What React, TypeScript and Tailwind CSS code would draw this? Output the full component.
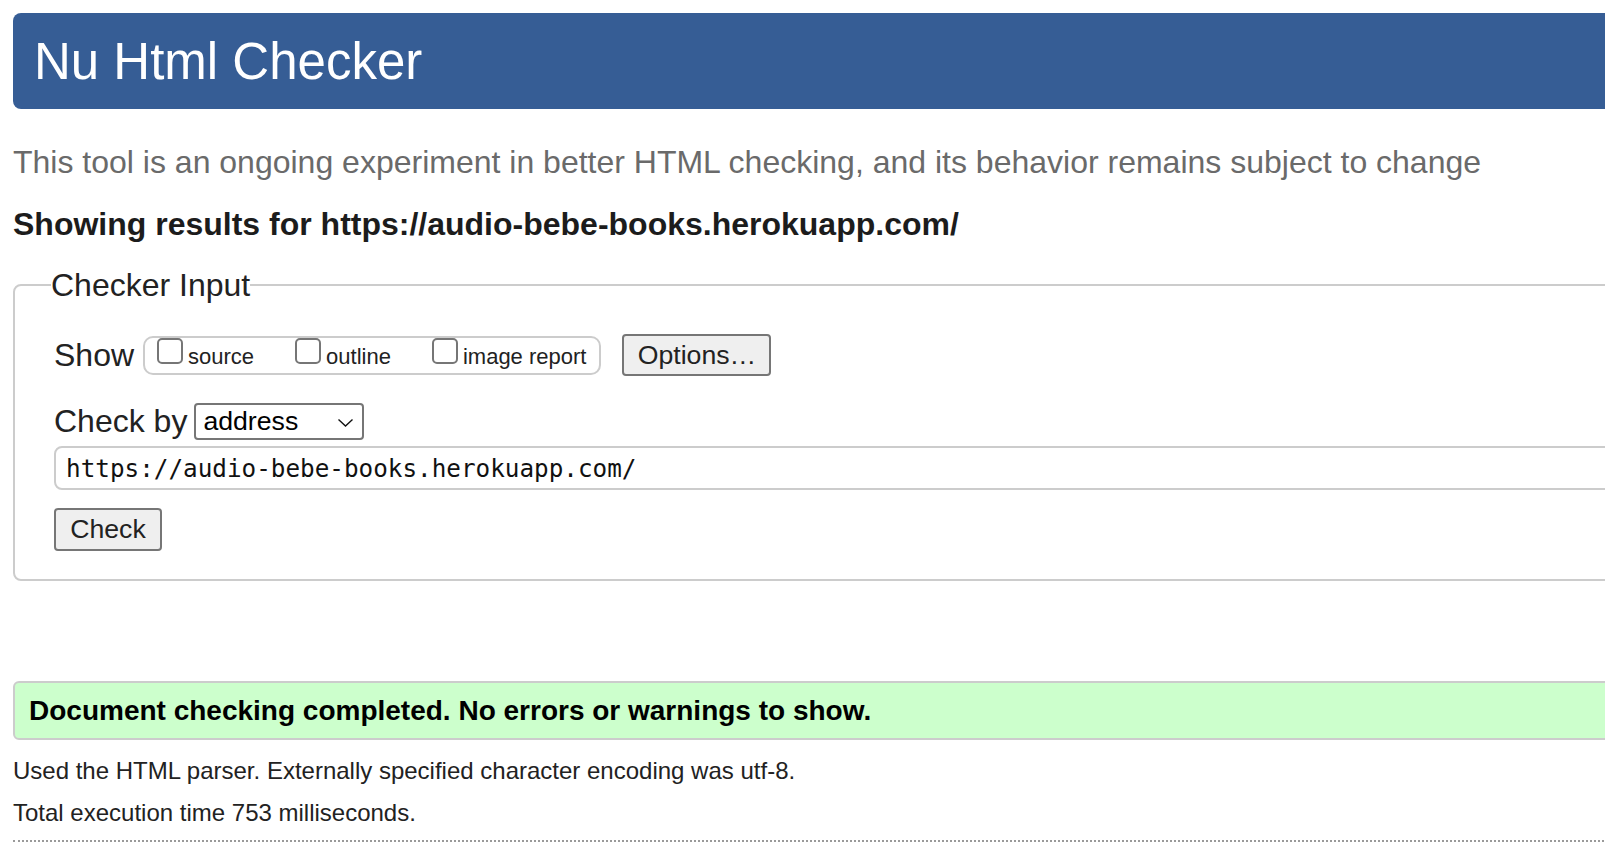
import React from "react";

const options = ["source", "outline", "image report"];

const Checkbox = ({ label, first }: { label: string; first?: boolean }) => (
  <label className={`flex items-start ${first ? "" : "ml-[41px]"}`}>
    <input
      type="checkbox"
      className="h-[26px] w-[26px] appearance-none rounded-[5px] border-2 border-[#767676] bg-white"
    />
    <span className="ml-[5px] mt-[6px] text-[22px] leading-[26px]">{label}</span>
  </label>
);

export default function App() {
  return (
    <div className="h-[845px] w-[1605px] overflow-hidden bg-white font-['Liberation_Sans',Arial,sans-serif] text-[#222222]">
      <div className="w-[1800px] pl-[13px] pt-[13px]">
        <h1 className="flex h-[96px] items-center rounded-l-[8px] bg-[#365d95] pl-[21px] text-[51px] font-normal leading-none text-white">
          Nu Html Checker
        </h1>

        <p className="mt-[33px] text-[32px] leading-[40px] text-[#6a6a6a]">
          This tool is an ongoing experiment in better HTML checking, and its behavior remains subject to change
        </p>

        <h2 className="mt-[22px] text-[32px] font-bold leading-[40px] text-[#1c1c1c]">
          Showing results for https://audio-bebe-books.herokuapp.com/
        </h2>

        <fieldset className="mt-[21px] rounded-[8px] border-2 border-[#cccccc] pb-[28px] pl-[39px]">
          <legend className="ml-[-3px] text-[32px] leading-[40px]">Checker Input</legend>

          <div className="mt-[29px] flex items-center">
            <span className="text-[32px] leading-[40px]">Show</span>
            <div className="ml-[9px] flex h-[39px] items-start rounded-[10px] border-2 border-[#cccccc] pl-[12px] pr-[13px]">
              {options.map((o, i) => (
                <Checkbox key={o} label={o} first={i === 0} />
              ))}
            </div>
            <button className="ml-[21px] h-[42px] w-[149px] rounded-[4px] border-2 border-[#767676] bg-[#efefef] text-[26.67px] leading-none">
              Options…
            </button>
          </div>

          <div className="mt-[25px] flex h-[40px] items-center">
            <span className="text-[32px] leading-[40px]">Check by</span>
            <div className="relative ml-[7px]">
              <select className="block h-[37px] w-[170px] appearance-none rounded-[4px] border-2 border-[#767676] bg-white pl-[7px] text-[26.67px] leading-none text-black">
                <option>address</option>
              </select>
              <svg
                className="pointer-events-none absolute right-[10px] top-[15px]"
                width="17"
                height="9"
                viewBox="0 0 17 9"
              >
                <path d="M1.5 1.5l7 6.5 7-6.5" fill="none" stroke="#111" strokeWidth="1.4" />
              </svg>
            </div>
          </div>

          <input
            readOnly
            value="https://audio-bebe-books.herokuapp.com/"
            className="mt-[5px] block h-[44px] w-full rounded-[8px] border-2 border-[#cccccc] pl-[10px] font-['DejaVu_Sans_Mono',monospace] text-[24.3px] text-[#111111] outline-none"
          />

          <button className="mt-[18px] block h-[43px] w-[108px] rounded-[4px] border-2 border-[#767676] bg-[#efefef] text-[26.67px] leading-none">
            Check
          </button>
        </fieldset>

        <div className="mt-[100px] flex h-[59px] items-center rounded-[6px] border-2 border-[#cccccc] bg-[#ccffcc] pl-[14px] text-[28px] font-bold leading-[32px] text-black">
          Document checking completed. No errors or warnings to show.
        </div>

        <p className="mt-[16px] text-[24px] leading-[30px]">
          Used the HTML parser. Externally specified character encoding was utf-8.
        </p>
        <p className="mt-[12px] text-[24px] leading-[30px]">Total execution time 753 milliseconds.</p>

        <div className="mt-[12px] border-t-2 border-dotted border-[#9a9a9a]" />
      </div>
    </div>
  );
}
